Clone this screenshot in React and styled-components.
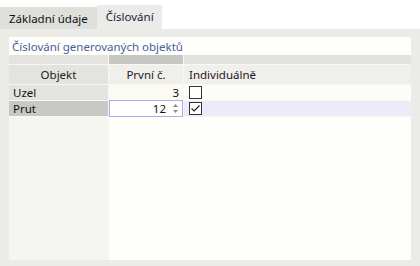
import React from "react";
import styled, { createGlobalStyle } from "styled-components";

const Global = createGlobalStyle`
  html, body { margin: 0; padding: 0; background: #ffffff; }
  body { font-family: "Noto Sans", "Open Sans", sans-serif; font-size: 12px; }
`;

const Page = styled.div`
  width: 420px;
  height: 266px;
  display: flex;
  flex-direction: column;
  overflow: hidden;
`;

const TabBar = styled.div`
  height: 29px;
  display: flex;
  align-items: flex-end;
  background: #ffffff;
`;

const Tab = styled.div`
  height: ${(p) => (p.$active ? 24 : 22)}px;
  padding: 0 ${(p) => (p.$active ? 8 : 9)}px 0 9px;
  display: flex;
  align-items: center;
  box-sizing: border-box;
  padding-bottom: ${(p) => (p.$active ? 2 : 0)}px;
  background: ${(p) => (p.$active ? "#ebebe7" : "#dfdfdb")};
  color: ${(p) => (p.$active ? "#1a1a40" : "#111111")};
  font-size: 11.5px;
  white-space: nowrap;
`;

const Body = styled.div`
  flex: 1;
  background: #ebebe7;
  padding: 8px 9px 6px 9px;
  display: flex;
`;

const Panel = styled.div`
  flex: 1;
  display: flex;
  flex-direction: column;
  background: #fefefa;
`;

const Title = styled.div`
  height: 18px;
  display: flex;
  align-items: center;
  padding-left: 3px;
  color: #4a5c9c;
  font-size: 11.5px;
  white-space: nowrap;
`;

const Grid = styled.div`
  flex: 1;
  display: grid;
  grid-template-columns: 99px 74px 1fr;
  grid-template-rows: 9px 19px 15px 15px 1fr;
  gap: 1px;
  background: #f7f7f3;
`;

const Band = styled.div`
  background: ${(p) => p.$bg};
`;

const HeadCell = styled.div`
  background: ${(p) => p.$bg};
  display: flex;
  align-items: center;
  justify-content: ${(p) => p.$align || "center"};
  padding-left: ${(p) => p.$pl || 0}px;
  color: ${(p) => p.$color || "#222"};
  font-size: 11.5px;
  white-space: nowrap;
`;

const NameCell = styled.div`
  background: ${(p) => (p.$selected ? "#c8c8c4" : "#e3e3e0")};
  display: flex;
  align-items: center;
  padding-left: 4px;
  color: #111;
  font-size: 11.5px;
`;

const NumCell = styled.div`
  background: #fbfbf4;
  display: flex;
  align-items: center;
  justify-content: flex-end;
  padding-right: 4px;
  color: #111;
  font-size: 11.5px;
`;

const SpinBox = styled.div`
  background: #ffffff;
  border: 1px solid #b3a9ea;
  margin: -1px 0 -1px 0;
  display: flex;
  align-items: center;
  justify-content: flex-end;
  padding-right: 3px;
  gap: 6px;
  color: #111;
  font-size: 11.5px;
`;

const Arrows = styled.svg`
  width: 7px;
  height: 11px;
`;

const CheckCell = styled.div`
  background: ${(p) => (p.$selected ? "#ecebf8" : "#fdfdf8")};
  display: flex;
  align-items: center;
  padding-left: 5px;
`;

const Box = styled.div`
  width: 11px;
  height: 11px;
  border: 1px solid #333333;
  background: #ffffff;
  display: flex;
  align-items: center;
  justify-content: center;
`;

const Filler = styled.div`
  background: ${(p) => p.$bg};
  grid-column: ${(p) => p.$span || "auto"};
`;

export default function App() {
  return (
    <Page>
      <Global />
      <TabBar>
        <Tab>Základní údaje</Tab>
        <Tab $active>Číslování</Tab>
      </TabBar>
      <Body>
        <Panel>
          <Title>Číslování generovaných objektů</Title>
          <Grid>
            <Band $bg="#e3e3e0" />
            <Band $bg="#c6c6c2" />
            <Band $bg="#e1e1de" />

            <HeadCell $bg="#e3e3e0">Objekt</HeadCell>
            <HeadCell $bg="#efefec">První č.</HeadCell>
            <HeadCell $bg="#efefec" $align="flex-start" $pl={5} $color="#2a1520">
              Individuálně
            </HeadCell>

            <NameCell>Uzel</NameCell>
            <NumCell>3</NumCell>
            <CheckCell>
              <Box />
            </CheckCell>

            <NameCell $selected>Prut</NameCell>
            <SpinBox>
              <span>12</span>
              <Arrows viewBox="0 0 7 11">
                <path d="M3.5 1 L6 4 L1 4 Z" fill="#888" />
                <path d="M3.5 10 L6 7 L1 7 Z" fill="#888" />
              </Arrows>
            </SpinBox>
            <CheckCell $selected>
              <Box>
                <svg width="11" height="11" viewBox="0 0 11 11">
                  <path d="M1.5 5.5 L4.2 8 L9.5 2.5" fill="none" stroke="#222" strokeWidth="1.2" />
                </svg>
              </Box>
            </CheckCell>

            <Filler $bg="#f5f6f2" />
            <Filler $bg="#fefefa" $span="span 2" />
          </Grid>
        </Panel>
      </Body>
    </Page>
  );
}
